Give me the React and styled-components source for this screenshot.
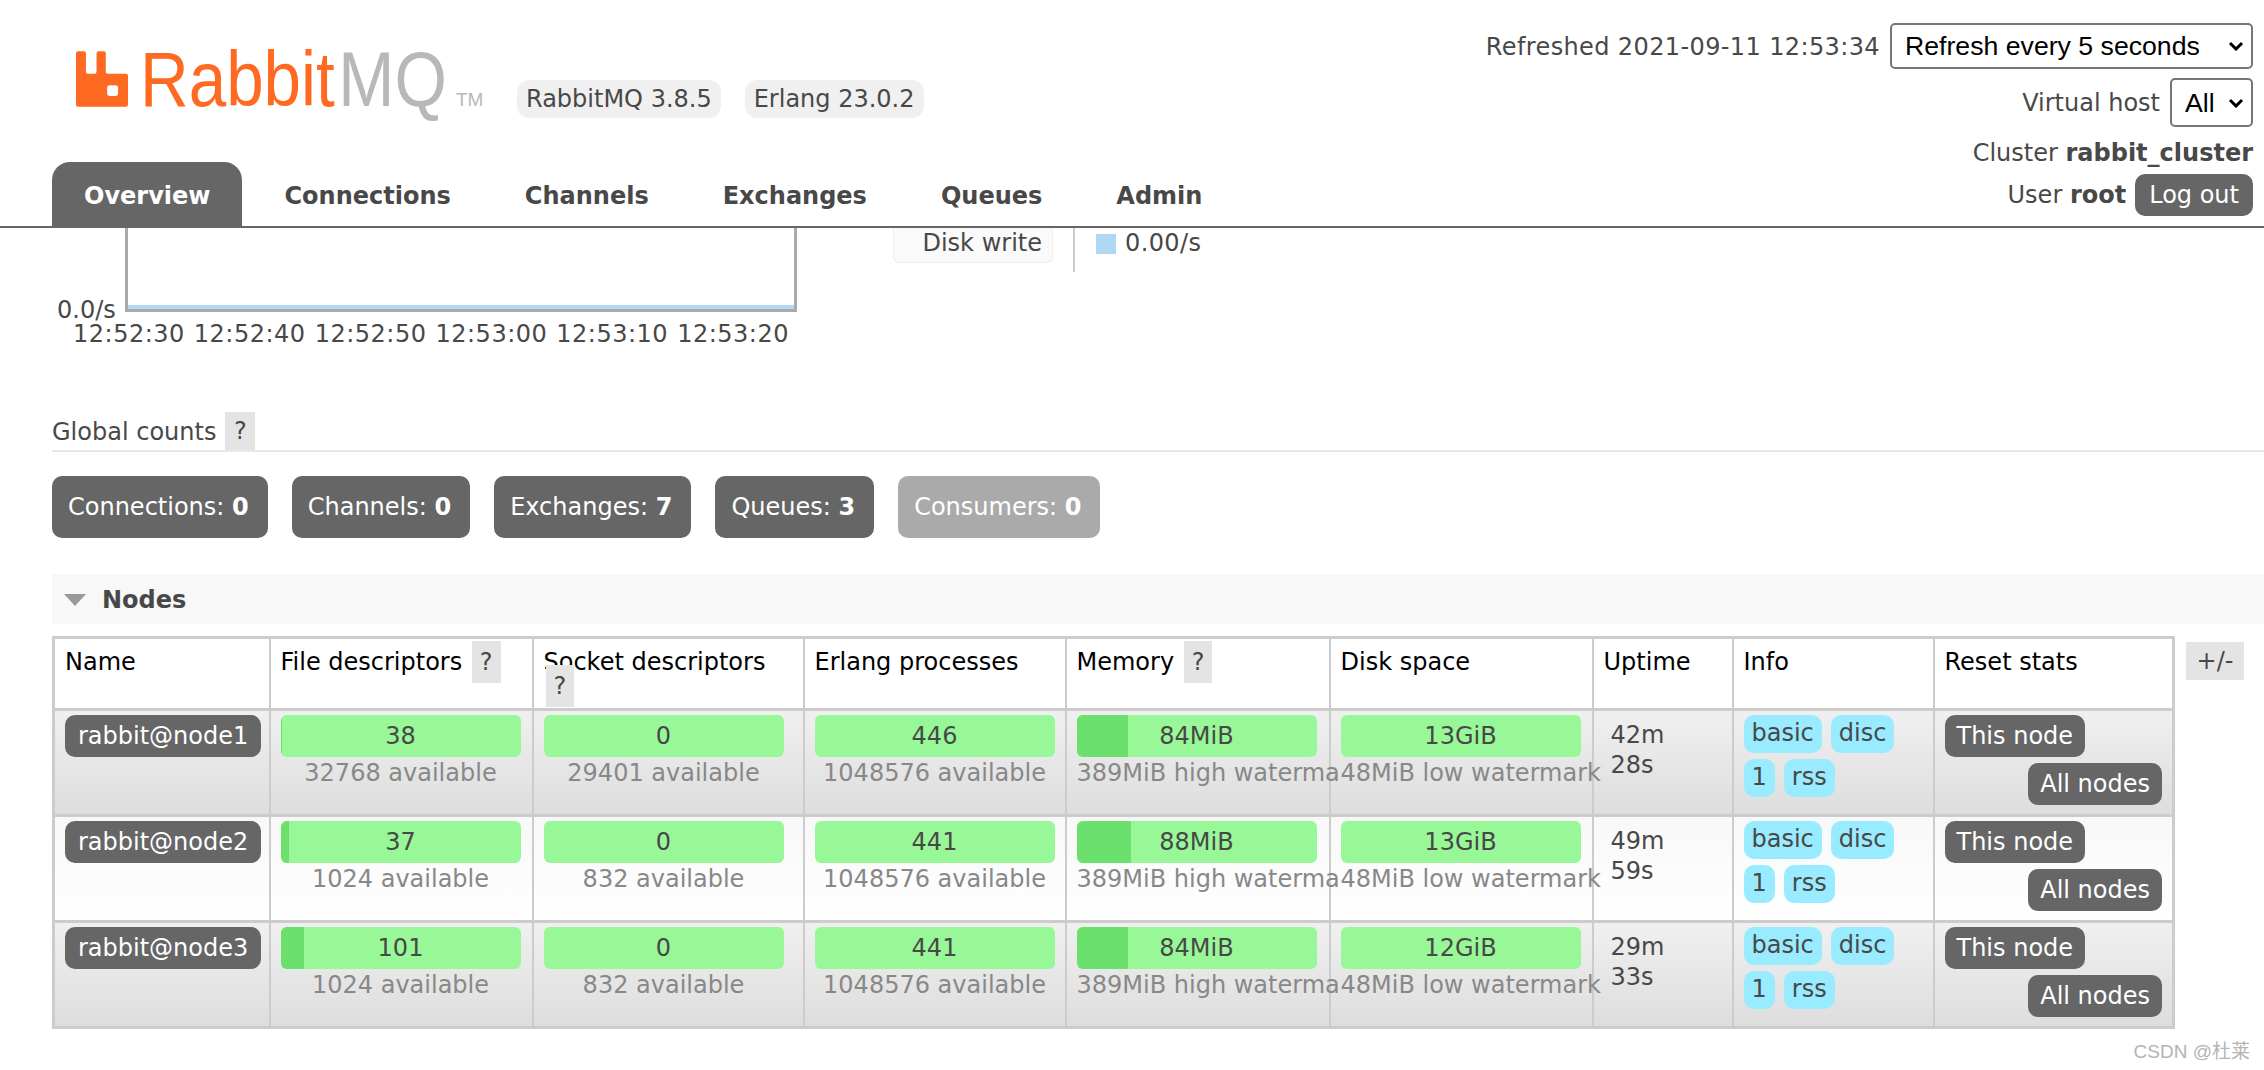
import React from 'react';
import styled, { createGlobalStyle } from 'styled-components';

const GlobalStyle = createGlobalStyle`
  html, body {
    margin: 0;
    background: #fff;
    overflow: hidden;
  }
  body {
    font-family: "DejaVu Sans", Verdana, sans-serif;
    font-size: 24px;
    color: #484848;
  }
`;

const Page = styled.div`
  width: 2264px;
  height: 1070px;
  position: relative;
  overflow: hidden;
`;

/* ---------- header ---------- */
const Header = styled.header`
  height: 228px;
  box-sizing: border-box;
  border-bottom: 2px solid #666;
  padding: 0 11px 0 52px;
  display: flex;
  justify-content: space-between;
`;

const HeaderLeft = styled.div`
  display: flex;
  flex-direction: column;
  justify-content: space-between;
`;

const LogoRow = styled.div`
  display: flex;
  align-items: flex-start;
  padding: 51px 0 0 24px;
`;

const LogoMark = styled.svg`
  width: 52px;
  height: 56px;
  flex: none;
`;

const LogoBox = styled.div`
  width: 316px;
  height: 56px;
  margin-left: 12px;
`;

const LogoText = styled.div`
  font-family: "Liberation Sans", Arial, sans-serif;
  font-size: 77px;
  line-height: 56px;
  color: #ff6a22;
  white-space: nowrap;
  transform: scaleX(0.875);
  transform-origin: left center;
`;

const LogoGrey = styled.span`
  color: #b8b8b8;
  margin-left: 4px;
`;

const LogoTm = styled.span`
  font-family: "Liberation Sans", Arial, sans-serif;
  font-size: 19px;
  line-height: 14px;
  color: #b8b8b8;
  margin: 42px 0 0 0;
  width: 28px;
`;

const VersionPill = styled.span`
  height: 38px;
  line-height: 38px;
  padding: 0 9px;
  margin: 29px 0 0 ${p => p.$gap}px;
  background: #f0f0f0;
  border-radius: 12px;
  white-space: nowrap;
`;

const Nav = styled.ul`
  list-style: none;
  display: flex;
  margin: 0;
  padding: 0;
`;

const Tab = styled.li`
  height: 64px;
  line-height: 68px;
  padding: 0 32px;
  margin-right: 10px;
  font-weight: bold;
  border-radius: 18px 18px 0 0;
  color: ${p => (p.$active ? '#fff' : '#484848')};
  background: ${p => (p.$active ? '#666' : 'transparent')};
`;

const HeaderRight = styled.div`
  padding-top: 23px;
  display: flex;
  flex-direction: column;
  align-items: flex-end;
`;

const MetaRow = styled.div`
  display: flex;
  align-items: center;
  justify-content: flex-end;
  gap: ${p => p.$gap || 8}px;
  height: ${p => p.$h}px;
  margin-top: ${p => p.$top || 0}px;
  white-space: nowrap;
`;

const Stamp = styled.span`
  letter-spacing: 0.38px;
  padding-top: 2px;
`;

const SelectWrap = styled.span`
  position: relative;
  display: block;
  line-height: 0;
`;

const Select = styled.select`
  appearance: none;
  height: ${p => p.$h}px;
  width: ${p => p.$w}px;
  font-family: "Liberation Sans", Arial, sans-serif;
  font-size: 26.67px;
  color: #000;
  background: #fff;
  border: 2px solid #767676;
  border-radius: 5px;
  padding: 0 0 0 13px;
`;

const Chevron = styled.svg`
  position: absolute;
  right: 9px;
  top: 50%;
  width: 16px;
  height: 10px;
  margin-top: -5px;
  pointer-events: none;
`;

const DarkButton = styled.span`
  display: inline-block;
  height: 42px;
  line-height: 42px;
  padding: 0 ${p => p.$pad || 12}px;
  background: #666;
  color: #fff;
  border-radius: 10px;
  white-space: nowrap;
  box-sizing: border-box;
  text-align: center;
`;

/* ---------- chart strip, scrolled under the header ---------- */
const ChartStrip = styled.section`
  height: 184px;
  padding-left: 52px;
  display: flex;
  align-items: flex-start;
`;

const ChartColumn = styled.div`
  width: 745px;
  flex: none;
`;

const ChartBody = styled.div`
  display: flex;
  align-items: flex-end;
  height: 84px;
`;

const YLabel = styled.span`
  width: 73px;
  flex: none;
  line-height: 30px;
  margin-bottom: -13px;
  padding-left: 5px;
  box-sizing: border-box;
`;

const Plot = styled.div`
  width: 672px;
  height: 84px;
  box-sizing: border-box;
  border: 3px solid #aaa;
  border-top: 0;
  display: flex;
  align-items: flex-end;
`;

const PlotLine = styled.div`
  width: 100%;
  height: 4px;
  background: #aed8f3;
`;

const Ticks = styled.div`
  display: flex;
  justify-content: space-between;
  width: 716px;
  margin: 7px 0 0 21px;
  line-height: 30px;
  letter-spacing: 0.5px;
`;

const Legend = styled.div`
  display: flex;
  align-items: flex-start;
  margin-left: 96px;
`;

const LegendName = styled.div`
  width: 160px;
  height: 35px;
  line-height: 30px;
  box-sizing: border-box;
  padding-right: 10px;
  text-align: right;
  background: #fafafa;
  border: 1px solid #eee;
  border-top: 0;
  border-radius: 0 0 6px 6px;
`;

const LegendValue = styled.div`
  height: 44px;
  margin-left: 20px;
  padding-left: 21px;
  border-left: 2px solid #ccc;
  display: flex;
  align-items: flex-start;
  gap: 9px;
  line-height: 30px;
  letter-spacing: 0.4px;
`;

const LegendSwatch = styled.span`
  width: 20px;
  height: 20px;
  margin-top: 6px;
  background: #aed8f3;
`;

/* ---------- global counts ---------- */
const SectionTitle = styled.h3`
  margin: 0 0 0 52px;
  height: 40px;
  box-sizing: border-box;
  border-bottom: 2px solid #e8e8e8;
  font-size: 24px;
  font-weight: normal;
  line-height: 40px;
  display: flex;
`;

const Help = styled.span`
  display: inline-block;
  width: 30px;
  height: 38px;
  line-height: 38px;
  margin-left: 9px;
  text-align: center;
  background: #e4e4e4;
  color: #484848;
`;

const Counts = styled.div`
  display: flex;
  gap: 24px;
  margin: 24px 0 0 52px;
`;

const Count = styled.div`
  height: 62px;
  line-height: 63px;
  padding: 0 19px 0 16px;
  border-radius: 10px;
  color: #fff;
  background: ${p => (p.$muted ? '#aaa' : '#666')};
  white-space: nowrap;
`;

/* ---------- nodes ---------- */
const NodesBar = styled.h2`
  margin: 36px 0 0 52px;
  height: 50px;
  box-sizing: border-box;
  padding: 1px 0 0 12px;
  display: flex;
  align-items: center;
  gap: 16px;
  background: #f8f8f8;
  font-size: 24px;
  font-weight: bold;
  color: #484848;
`;

const Triangle = styled.svg`
  width: 22px;
  height: 12px;
  flex: none;
`;

const TableRow = styled.div`
  display: flex;
  align-items: flex-start;
  gap: 11px;
  margin: 12px 0 0 52px;
`;

const Table = styled.table`
  table-layout: fixed;
  width: 2120px;
  flex: none;
  border-collapse: collapse;
  border: 3px solid #ccc;
`;

const Th = styled.th`
  height: 72px;
  box-sizing: border-box;
  padding: 11px 10px 0;
  vertical-align: top;
  text-align: left;
  font-weight: normal;
  line-height: 24px;
  color: #000;
  border: 2px solid #ccc;
  border-bottom-width: 3px;
`;

const InlineHelp = styled.span`
  padding: 7px 8px;
  margin-left: 2px;
  background: #e4e4e4;
  color: #484848;
`;

const Row = styled.tr`
  background: ${p =>
    p.$alt ? 'linear-gradient(#f8f8f8, #fff)' : 'linear-gradient(#f0f0f0, #ddd)'};
`;

const Td = styled.td`
  height: 106px;
  box-sizing: border-box;
  padding: 4px 10px 0;
  vertical-align: top;
  border: 2px solid #ccc;
  border-bottom-width: 3px;
`;

const Bar = styled.div`
  position: relative;
  width: 240px;
  height: 42px;
  line-height: 42px;
  border-radius: 6px;
  overflow: hidden;
  background: #98f898;
  text-align: center;
`;

const BarFill = styled.div`
  position: absolute;
  left: 0;
  top: 0;
  bottom: 0;
  background: #6ce06c;
`;

const BarLabel = styled.span`
  position: relative;
`;

const Sub = styled.div`
  line-height: 30px;
  margin-top: 1px;
  width: 240px;
  color: #888;
  white-space: nowrap;
  text-align: center;
`;

const WatermarkSub = styled(Sub)`
  width: 262px;
  text-align: left;
  overflow: hidden;
`;

const UptimeLine = styled.div`
  line-height: 30px;
  padding: ${p => (p.$first ? '5px' : '0')} 0 0 7px;
`;

const Pills = styled.div`
  display: flex;
  flex-wrap: wrap;
  gap: 6px 9px;
  width: 160px;
`;

const Pill = styled.span`
  height: 38px;
  line-height: 36px;
  padding: 0 8px;
  border-radius: 10px;
  background: #99ebff;
`;

const ResetStack = styled.div`
  display: flex;
  flex-direction: column;
  gap: 6px;
`;

const ThisNode = styled(DarkButton)`
  align-self: flex-start;
`;

const AllNodes = styled(DarkButton)`
  align-self: flex-end;
`;

const ColumnToggle = styled.span`
  width: 58px;
  height: 38px;
  line-height: 38px;
  margin-top: 6px;
  flex: none;
  text-align: center;
  background: #e4e4e4;
  color: #484848;
`;

const Watermark = styled.div`
  position: absolute;
  right: 14px;
  bottom: 6px;
  font-family: "Liberation Sans", "Noto Sans CJK SC", sans-serif;
  font-size: 19px;
  line-height: 24px;
  color: #b4b4b4;
`;

const columns = [216, 263, 271, 262, 264, 263, 140, 201, 240];

const nodes = [
  { name: 'rabbit@node1', fd: 38, fdTotal: 32768, sock: 29401, proc: 446, mem: 84, disk: '13GiB', up: ['42m', '28s'] },
  { name: 'rabbit@node2', fd: 37, fdTotal: 1024, sock: 832, proc: 441, mem: 88, disk: '13GiB', up: ['49m', '59s'] },
  { name: 'rabbit@node3', fd: 101, fdTotal: 1024, sock: 832, proc: 441, mem: 84, disk: '12GiB', up: ['29m', '33s'] },
];

const Meter = ({ label, ratio }) => (
  <Bar>
    {ratio > 0.001 && <BarFill style={{ width: `${ratio * 100}%` }} />}
    <BarLabel>{label}</BarLabel>
  </Bar>
);

const NativeSelect = ({ w, h, label }) => (
  <SelectWrap>
    <Select $w={w} $h={h} defaultValue={label}>
      <option value={label}>{label}</option>
    </Select>
    <Chevron viewBox="0 0 16 10">
      <path d="M2 2l6 6 6-6" fill="none" stroke="#000" strokeWidth="3" />
    </Chevron>
  </SelectWrap>
);

const App = () => (
  <Page>
    <GlobalStyle />
    <Header>
      <HeaderLeft>
        <LogoRow>
          <LogoMark viewBox="78 62 157 168">
            <path
              fill="#ff6a22"
              fillRule="evenodd"
              d="M84 62h18q6 0 6 6v56q0 6 6 6h20q6 0 6-6V68q0-6 6-6h16q6 0 6 6v56q0 6 6 6h55q6 0 6 6v88q0 6-6 6H84q-6 0-6-6V68q0-6 6-6zM180 165q-8 0-8 8v16q0 8 8 8h17q8 0 8-8v-16q0-8-8-8z"
            />
          </LogoMark>
          <LogoBox>
            <LogoText>
              Rabbit<LogoGrey>MQ</LogoGrey>
            </LogoText>
          </LogoBox>
          <LogoTm>TM</LogoTm>
          <VersionPill $gap={33}>RabbitMQ 3.8.5</VersionPill>
          <VersionPill $gap={24}>Erlang 23.0.2</VersionPill>
        </LogoRow>
        <Nav>
          <Tab $active>Overview</Tab>
          <Tab>Connections</Tab>
          <Tab>Channels</Tab>
          <Tab>Exchanges</Tab>
          <Tab>Queues</Tab>
          <Tab>Admin</Tab>
        </Nav>
      </HeaderLeft>
      <HeaderRight>
        <MetaRow $h={46} $gap={10}>
          <Stamp>Refreshed 2021-09-11 12:53:34</Stamp>
          <NativeSelect w={363} h={46} label="Refresh every 5 seconds" />
        </MetaRow>
        <MetaRow $h={49} $top={9} $gap={10}>
          Virtual host
          <NativeSelect w={83} h={49} label="All" />
        </MetaRow>
        <MetaRow $h={30} $top={11}>
          <span>
            Cluster <b>rabbit_cluster</b>
          </span>
        </MetaRow>
        <MetaRow $h={42} $top={6} $gap={9}>
          <span>
            User <b>root</b>
          </span>
          <DarkButton $pad={14}>Log out</DarkButton>
        </MetaRow>
      </HeaderRight>
    </Header>

    <ChartStrip>
      <ChartColumn>
        <ChartBody>
          <YLabel>0.0/s</YLabel>
          <Plot>
            <PlotLine />
          </Plot>
        </ChartBody>
        <Ticks>
          <span>12:52:30</span>
          <span>12:52:40</span>
          <span>12:52:50</span>
          <span>12:53:00</span>
          <span>12:53:10</span>
          <span>12:53:20</span>
        </Ticks>
      </ChartColumn>
      <Legend>
        <LegendName>Disk write</LegendName>
        <LegendValue>
          <LegendSwatch />
          0.00/s
        </LegendValue>
      </Legend>
    </ChartStrip>

    <SectionTitle>
      Global counts <Help>?</Help>
    </SectionTitle>
    <Counts>
      <Count>Connections: <b>0</b></Count>
      <Count>Channels: <b>0</b></Count>
      <Count>Exchanges: <b>7</b></Count>
      <Count>Queues: <b>3</b></Count>
      <Count $muted>Consumers: <b>0</b></Count>
    </Counts>

    <NodesBar>
      <Triangle viewBox="0 0 22 12">
        <path d="M0 0h22L11 12z" fill="#999" />
      </Triangle>
      Nodes
    </NodesBar>
    <TableRow>
      <Table>
        <colgroup>
          {columns.map((w, i) => (
            <col key={i} style={{ width: w }} />
          ))}
        </colgroup>
        <thead>
          <tr>
            <Th>Name</Th>
            <Th>File descriptors <InlineHelp>?</InlineHelp></Th>
            <Th>Socket descriptors <InlineHelp>?</InlineHelp></Th>
            <Th>Erlang processes</Th>
            <Th>Memory <InlineHelp>?</InlineHelp></Th>
            <Th>Disk space</Th>
            <Th>Uptime</Th>
            <Th>Info</Th>
            <Th>Reset stats</Th>
          </tr>
        </thead>
        <tbody>
          {nodes.map((n, i) => (
            <Row key={n.name} $alt={i === 1}>
              <Td>
                <DarkButton $pad={13}>{n.name}</DarkButton>
              </Td>
              <Td>
                <Meter label={n.fd} ratio={n.fd / n.fdTotal} />
                <Sub>{n.fdTotal} available</Sub>
              </Td>
              <Td>
                <Meter label={0} ratio={0} />
                <Sub>{n.sock} available</Sub>
              </Td>
              <Td>
                <Meter label={n.proc} ratio={0} />
                <Sub>1048576 available</Sub>
              </Td>
              <Td>
                <Meter label={`${n.mem}MiB`} ratio={n.mem / 389} />
                <WatermarkSub>389MiB high watermark</WatermarkSub>
              </Td>
              <Td>
                <Meter label={n.disk} ratio={0} />
                <WatermarkSub>48MiB low watermark</WatermarkSub>
              </Td>
              <Td>
                <UptimeLine $first>{n.up[0]}</UptimeLine>
                <UptimeLine>{n.up[1]}</UptimeLine>
              </Td>
              <Td>
                <Pills>
                  <Pill>basic</Pill>
                  <Pill>disc</Pill>
                  <Pill>1</Pill>
                  <Pill>rss</Pill>
                </Pills>
              </Td>
              <Td>
                <ResetStack>
                  <ThisNode>This node</ThisNode>
                  <AllNodes>All nodes</AllNodes>
                </ResetStack>
              </Td>
            </Row>
          ))}
        </tbody>
      </Table>
      <ColumnToggle>+/-</ColumnToggle>
    </TableRow>
    <Watermark>CSDN @杜莱</Watermark>
  </Page>
);

export default App;
